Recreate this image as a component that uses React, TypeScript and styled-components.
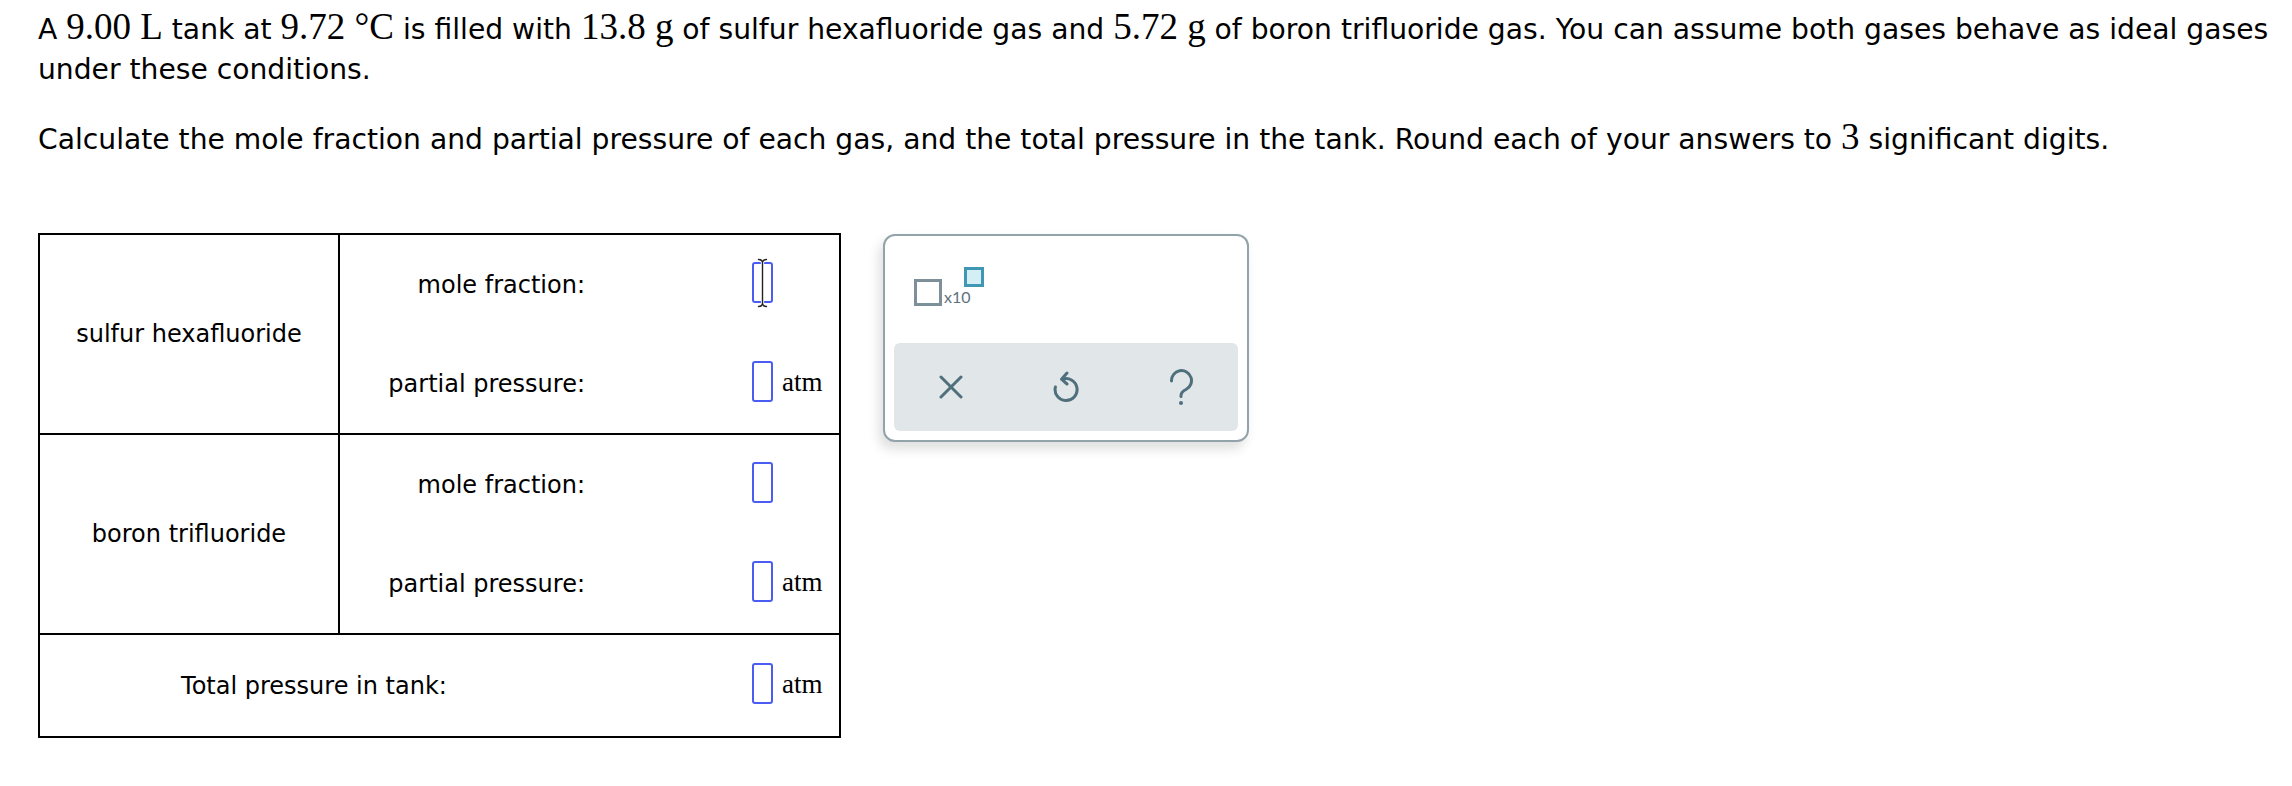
import React from "react";
import styled, { createGlobalStyle } from "styled-components";

const Global = createGlobalStyle`
  html, body { margin: 0; padding: 0; background: #ffffff; }
  body { font-family: "DejaVu Sans", Verdana, sans-serif; color: #000000; }
`;

const Page = styled.div`
  padding: 8px 10px 40px 38px;
`;

const Para = styled.p<{ $gap?: number }>`
  margin: 0 0 ${(p) => p.$gap ?? 0}px 0;
  font-size: 28.2px;
  line-height: 40px;
`;

const M = styled.span`
  font-family: "Liberation Serif", "Times New Roman", serif;
  font-size: 37px;
  line-height: 1;
`;

const Work = styled.div`
  display: flex;
  align-items: flex-start;
  gap: 42px;
  margin-top: 73px;
`;

const Table = styled.div`
  width: 803px;
  box-sizing: border-box;
  border: 2px solid #000;
  font-size: 24px;
`;

const GasRow = styled.div`
  display: grid;
  grid-template-columns: 300px 1fr;
  height: 200px;
  box-sizing: border-box;
  border-bottom: 2px solid #000;
`;

const NameCell = styled.div`
  border-right: 2px solid #000;
  display: flex;
  align-items: center;
  justify-content: center;
`;

const Fields = styled.div`
  display: grid;
  grid-template-rows: 1fr 1fr;
`;

const FieldRow = styled.div`
  display: grid;
  grid-template-columns: 248px 1fr;
  align-items: center;
`;

const Label = styled.div`
  text-align: right;
  padding-right: 3px;
`;

const TotalRow = styled.div`
  display: grid;
  grid-template-columns: 548px 1fr;
  align-items: center;
  height: 101px;
`;

const TotalLabel = styled.div`
  text-align: center;
`;

const AnswerCell = styled.div`
  display: flex;
  align-items: center;
  padding-left: 164px;
`;

const Blank = styled.span`
  position: relative;
  display: inline-block;
  width: 21px;
  height: 41px;
  box-sizing: border-box;
  border: 2px solid #4a5cf2;
  border-radius: 3px;
  margin-bottom: 5px;
`;

const Unit = styled.span`
  font-family: "Liberation Serif", "Times New Roman", serif;
  font-size: 27px;
  margin-left: 9px;
  margin-bottom: 3px;
`;

const Cursor = styled.svg`
  position: absolute;
  left: 3px;
  top: -6px;
`;

const Panel = styled.div`
  width: 366px;
  height: 208px;
  margin-top: 1px;
  box-sizing: border-box;
  border: 2px solid #92a3aa;
  border-radius: 12px;
  background: #fff;
  box-shadow: -4px 7px 12px rgba(0, 0, 0, 0.13);
  padding: 9px;
  display: flex;
  flex-direction: column;
  justify-content: space-between;
`;

const Tools = styled.div`
  padding: 22px 0 0 20px;
  display: flex;
`;

const ExpGroup = styled.div`
  display: flex;
  align-items: flex-end;
  height: 39px;
`;

const BigBox = styled.span`
  display: block;
  width: 28px;
  height: 27px;
  box-sizing: border-box;
  border: 3px solid #7d9099;
`;

const Times = styled.span`
  font-family: Lato, "Open Sans", sans-serif;
  font-size: 16px;
  line-height: 1;
  color: #5d727c;
  margin-left: 2px;
  margin-bottom: 1px;
`;

const ExpBox = styled.span`
  display: block;
  align-self: flex-start;
  width: 20px;
  height: 20px;
  box-sizing: border-box;
  border: 3px solid #3f97b4;
  background: #d4eef5;
  margin-left: -7px;
`;

const Bar = styled.div`
  height: 88px;
  background: #e1e6e9;
  border-radius: 6px;
  display: grid;
  grid-template-columns: repeat(3, 1fr);
  align-items: center;
  justify-items: center;
`;

const IconBtn = styled.span`
  display: flex;
  align-items: center;
  justify-content: center;
  color: #4f6f7d;
`;

const ICON = "#4f6f7d";

const IBeam = () => (
  <Cursor width="11" height="50" viewBox="0 0 11 50">
    <g fill="none" strokeLinecap="round">
      <path d="M1.5 1.5 Q5.5 1.5 5.5 5 Q5.5 1.5 9.5 1.5 M5.5 5 V45 M1.5 48.5 Q5.5 48.5 5.5 45 Q5.5 48.5 9.5 48.5" stroke="#fff" strokeWidth="3.2" />
      <path d="M1.5 1.5 Q5.5 1.5 5.5 5 Q5.5 1.5 9.5 1.5 M5.5 5 V45 M1.5 48.5 Q5.5 48.5 5.5 45 Q5.5 48.5 9.5 48.5" stroke="#222" strokeWidth="1.4" />
    </g>
  </Cursor>
);

const XIcon = () => (
  <svg width="24" height="24" viewBox="0 0 24 24">
    <path d="M2 2 L22 22 M22 2 L2 22" stroke={ICON} strokeWidth="3" strokeLinecap="round" fill="none" />
  </svg>
);

const UndoIcon = () => (
  <svg width="26" height="32" viewBox="0 0 26 32">
    <g stroke={ICON} strokeWidth="3" strokeLinecap="round" strokeLinejoin="round" fill="none">
      <path d="M9.5 8.2 A11 11 0 1 1 2.4 16" />
      <path d="M14 2 L8.5 8.2 L14 13" />
    </g>
  </svg>
);

const HelpIcon = () => (
  <svg width="26" height="37" viewBox="0 0 26 37">
    <g stroke={ICON} strokeWidth="3" strokeLinecap="round" fill="none">
      <path d="M3.5 12 A10 10 0 1 1 18 20.5 Q13 23 13 26.5 V27.5" />
    </g>
    <circle cx="13" cy="34" r="2" fill={ICON} />
  </svg>
);

type FieldProps = { label: string; unit?: string; cursor?: boolean };

const Field = ({ label, unit, cursor }: FieldProps) => (
  <FieldRow>
    <Label>{label}</Label>
    <AnswerCell>
      <Blank>{cursor && <IBeam />}</Blank>
      {unit && <Unit>{unit}</Unit>}
    </AnswerCell>
  </FieldRow>
);

const gases = [
  { name: "sulfur hexafluoride", cursor: true },
  { name: "boron trifluoride", cursor: false },
];

export default function App() {
  return (
    <>
      <Global />
      <Page>
        <Para $gap={28}>
          A <M>9.00 L</M> tank at <M>9.72 °C</M> is filled with <M>13.8 g</M> of sulfur hexafluoride gas
          and <M>5.72 g</M> of boron trifluoride gas. You can assume both gases behave as ideal gases
          under these conditions.
        </Para>
        <Para>
          Calculate the mole fraction and partial pressure of each gas, and the total pressure in the
          tank. Round each of your answers to <M>3</M> significant digits.
        </Para>
        <Work>
          <Table>
            {gases.map((g) => (
              <GasRow key={g.name}>
                <NameCell>{g.name}</NameCell>
                <Fields>
                  <Field label="mole fraction:" cursor={g.cursor} />
                  <Field label="partial pressure:" unit="atm" />
                </Fields>
              </GasRow>
            ))}
            <TotalRow>
              <TotalLabel>Total pressure in tank:</TotalLabel>
              <AnswerCell>
                <Blank />
                <Unit>atm</Unit>
              </AnswerCell>
            </TotalRow>
          </Table>
          <Panel>
            <Tools>
              <ExpGroup>
                <BigBox />
                <Times>x10</Times>
                <ExpBox />
              </ExpGroup>
            </Tools>
            <Bar>
              <IconBtn><XIcon /></IconBtn>
              <IconBtn><UndoIcon /></IconBtn>
              <IconBtn><HelpIcon /></IconBtn>
            </Bar>
          </Panel>
        </Work>
      </Page>
    </>
  );
}
